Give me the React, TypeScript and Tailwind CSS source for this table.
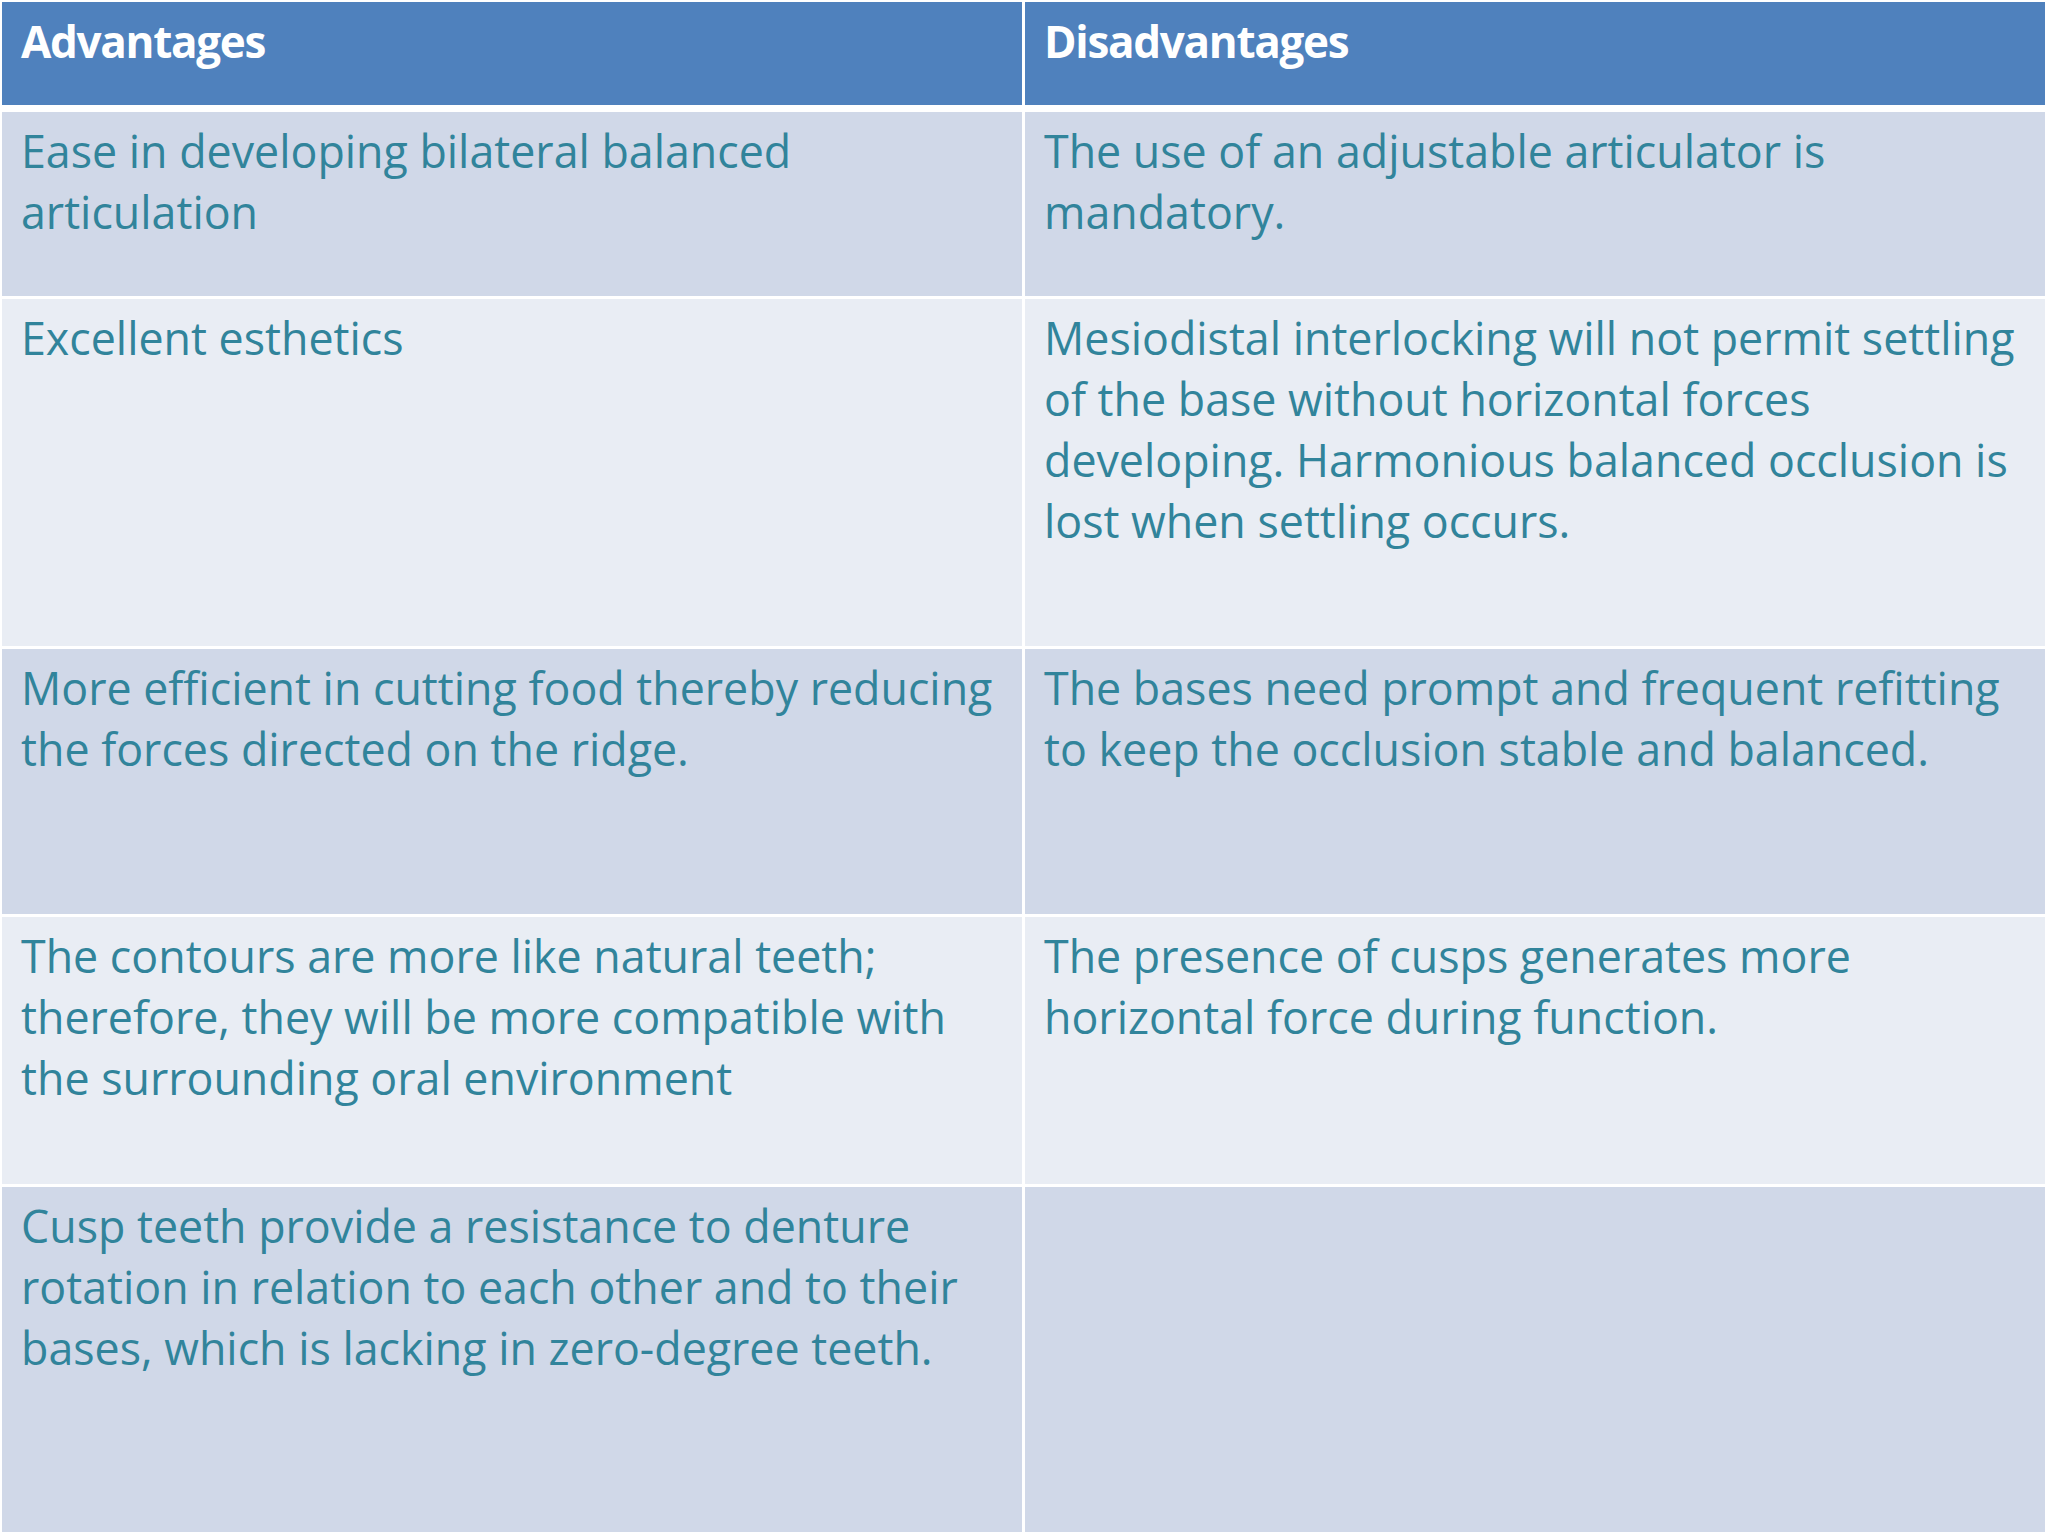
import React from "react";

type Row = { h: string; bg: string; left: string[]; right: string[] };

const rows: Row[] = [
  {
    h: "h-[184px]",
    bg: "bg-[#d0d8e8]",
    left: ["Ease in developing bilateral balanced", "articulation"],
    right: ["The use of an adjustable articulator is", "mandatory."],
  },
  {
    h: "h-[347px]",
    bg: "bg-[#e9edf4]",
    left: ["Excellent esthetics"],
    right: [
      "Mesiodistal interlocking will not permit settling",
      "of the base without horizontal forces",
      "developing. Harmonious balanced occlusion is",
      "lost when settling occurs.",
    ],
  },
  {
    h: "h-[265px]",
    bg: "bg-[#d0d8e8]",
    left: ["More efficient in cutting food thereby reducing", "the forces directed on the ridge."],
    right: ["The bases need prompt and frequent refitting", "to keep the occlusion stable and balanced."],
  },
  {
    h: "h-[267px]",
    bg: "bg-[#e9edf4]",
    left: [
      "The contours are more like natural teeth;",
      "therefore, they will be more compatible with",
      "the surrounding oral environment",
    ],
    right: ["The presence of cusps generates more", "horizontal force during function."],
  },
  {
    h: "h-[345px]",
    bg: "bg-[#d0d8e8]",
    left: [
      "Cusp teeth provide a resistance to denture",
      "rotation in relation to each other and to their",
      "bases, which is lacking in zero-degree teeth.",
    ],
    right: [],
  },
];

function Cell({ lines, bg }: { lines: string[]; bg: string }) {
  return (
    <div className={`${bg} pl-[19px] pt-[8px] text-[#31849b] text-[44.75px] leading-[61px]`}>
      {lines.map((l, i) => (
        <div key={i} className="whitespace-nowrap">
          {l}
        </div>
      ))}
    </div>
  );
}

export default function App() {
  return (
    <div className="w-[2048px] h-[1536px] bg-white pt-[2px] pl-[2px] font-['Open_Sans',sans-serif]">
      <div className="w-[2043px] flex flex-col gap-[3px]">
        <div className="grid grid-cols-[1020px_1020px] gap-x-[3px] h-[103px] mb-[4px]">
          <div className="bg-[#4f81bd] pl-[19px] pt-[9px] text-white font-bold text-[44px] tracking-[-1.3px] leading-[61px]">
            Advantages
          </div>
          <div className="bg-[#4f81bd] pl-[19px] pt-[9px] text-white font-bold text-[44px] tracking-[-1.3px] leading-[61px]">
            Disadvantages
          </div>
        </div>
        {rows.map((r, i) => (
          <div key={i} className={`grid grid-cols-[1020px_1020px] gap-x-[3px] ${r.h}`}>
            <Cell lines={r.left} bg={r.bg} />
            <Cell lines={r.right} bg={r.bg} />
          </div>
        ))}
      </div>
    </div>
  );
}
